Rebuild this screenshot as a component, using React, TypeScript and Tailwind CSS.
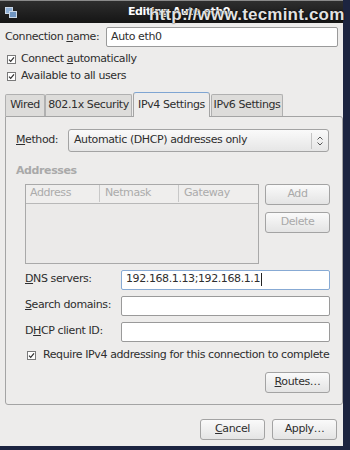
function Check({ className = "" }: { className?: string }) {
  return (
    <svg width="9" height="9" viewBox="0 0 9 9" className={className}>
      <rect x="0.5" y="0.5" width="8" height="8" fill="#fff" stroke="#7a7a7a" />
      <path d="M2 4.6 L3.7 6.4 L7 2.4" fill="none" stroke="#2e2e2e" strokeWidth="1.2" />
    </svg>
  );
}

function Btn({ children, disabled = false, className = "" }: { children: React.ReactNode; disabled?: boolean; className?: string }) {
  return (
    <div
      className={`flex h-[21px] w-[65px] items-center justify-center rounded-[3px] border border-[#a3a3a3] bg-gradient-to-b from-[#fafafa] to-[#e4e4e4] ${
        disabled ? "text-[#a9a9a9]" : "text-[#2e2e2e]"
      } ${className}`}
    >
      {children}
    </div>
  );
}

function Field({ value = "", focused = false, className = "" }: { value?: string; focused?: boolean; className?: string }) {
  return (
    <div
      className={`flex h-[20px] items-center rounded-[2px] border bg-white px-[4px] text-[#2e2e2e] ${
        focused ? "border-[#87aad4]" : "border-[#9a9a9a]"
      } ${className}`}
    >
      {value}
      {focused && <span className="ml-[1px] h-[13px] w-px bg-[#222]" />}
    </div>
  );
}

const tabs = [
  { label: "Wired", w: "w-[40px]" },
  { label: "802.1x Security", w: "w-[87px]" },
  { label: "IPv4 Settings", w: "w-[77px]", active: true },
  { label: "IPv6 Settings", w: "w-[72px]" },
];

export default function App() {
  return (
    <div
      className="h-[450px] w-[350px] overflow-hidden whitespace-nowrap bg-[#1c2440] text-[11px] tracking-[-0.4px] text-[#2e2e2e]"
      style={{ fontFamily: '"DejaVu Sans", sans-serif' }}
    >
      <div className="flex h-[446px] w-[343px] flex-col bg-[#edeceb]">
        {/* title bar */}
        <div className="relative flex h-[23px] items-center border-t border-[#8a8a8a] bg-gradient-to-b from-[#2e2e2e] to-[#151515] px-[5px]">
          <svg width="12" height="11" viewBox="0 0 12 11">
            <rect x="0.5" y="0.5" width="7" height="6" fill="#8fb0d6" stroke="#c9d6e6" />
            <rect x="4.5" y="4.5" width="7" height="6" fill="#6f95c2" stroke="#c9d6e6" />
          </svg>
          <span className="ml-[111px] font-bold text-white">Editing Auto eth0</span>
          <span
            className="absolute left-[149px] top-[1px] text-[17px] font-bold tracking-[0.2px] text-[#e2e2e2]"
            style={{ fontFamily: '"Liberation Sans", sans-serif', textShadow: "0 0 2px #000, 0 0 1px #000" }}
          >
            http://www.tecmint.com
          </span>
        </div>

        <div className="flex flex-col px-[5px]">
          <div className="mt-[4px] flex items-center">
            <span className="w-[102px]">
              Connection <u>n</u>ame:
            </span>
            <Field value="Auto eth0" className="w-[234px]" />
          </div>
          <div className="mt-[4px] flex h-[17px] items-center pl-[2px]">
            <Check />
            <span className="ml-[5px]">
              Connect <u>a</u>utomatically
            </span>
          </div>
          <div className="flex h-[17px] items-center pl-[2px]">
            <Check />
            <span className="ml-[5px]">Available to all users</span>
          </div>

          {/* tabs */}
          <div className="mt-[7px] flex items-end">
            {tabs.map((t) =>
              t.active ? (
                <div
                  key={t.label}
                  className={`${t.w} relative z-10 -mb-px mx-[1px] flex h-[25px] items-center justify-center rounded-t-[3px] border border-b-0 border-[#a4a4a4] border-t-[#7fa5d2] bg-[#edeceb]`}
                >
                  {t.label}
                </div>
              ) : (
                <div
                  key={t.label}
                  className={`${t.w} flex h-[22px] items-center justify-center rounded-t-[2px] border border-b-0 border-[#b0b0b0] bg-[#dddcda]`}
                >
                  {t.label}
                </div>
              )
            )}
          </div>

          {/* panel */}
          <div className="flex h-[289px] w-[338px] flex-col rounded-[3px] rounded-tl-none border border-[#a4a4a4] pl-[10px] pr-[12px]">
            <div className="mt-[12px] flex items-center">
              <span className="w-[52px]">
                <u>M</u>ethod:
              </span>
              <div className="flex h-[23px] w-[261px] items-center rounded-[3px] border border-[#a3a3a3] bg-gradient-to-b from-[#fafafa] to-[#e6e6e6] pl-[5px]">
                <span className="flex-1">Automatic (DHCP) addresses only</span>
                <span className="h-[16px] w-px bg-[#c4c4c4]" />
                <svg width="16" height="12" viewBox="0 0 16 12">
                  <path d="M5.5 4.5 L8 2 L10.5 4.5 M5.5 7.5 L8 10 L10.5 7.5" fill="none" stroke="#555" strokeWidth="1" />
                </svg>
              </div>
            </div>

            <div className="mt-[11px] font-bold text-[#a9a9a9]">Addresses</div>

            <div className="mt-[4px] flex pl-[9px]">
              <div className="flex h-[80px] w-[234px] flex-col border border-[#a9a9a9] bg-[#ebeae9]">
                <div className="flex h-[19px] items-center border-b border-[#b8b8b8] bg-[#efeeed] text-[#ababab]">
                  <span className="w-[74px] border-r border-[#c8c8c8] pl-[4px]">Address</span>
                  <span className="w-[79px] border-r border-[#c8c8c8] pl-[5px]">Netmask</span>
                  <span className="pl-[5px]">Gateway</span>
                </div>
              </div>
              <div className="ml-[6px] flex flex-col gap-[7px]">
                <Btn disabled>Add</Btn>
                <Btn disabled>Delete</Btn>
              </div>
            </div>

            <div className="mt-[6px] flex flex-col gap-[6px] pl-[9px]">
              <div className="flex items-center">
                <span className="w-[96px]">
                  <u>D</u>NS servers:
                </span>
                <Field value="192.168.1.13;192.168.1.1" focused className="w-[209px]" />
              </div>
              <div className="flex items-center">
                <span className="w-[96px]">
                  <u>S</u>earch domains:
                </span>
                <Field className="w-[209px]" />
              </div>
              <div className="flex items-center">
                <span className="w-[96px]">
                  D<u>H</u>CP client ID:
                </span>
                <Field className="w-[209px]" />
              </div>
            </div>

            <div className="mt-[6px] flex h-[16px] items-center pl-[11px]">
              <Check />
              <span className="ml-[7px]">Require IPv4 addressing for this connection to complete</span>
            </div>

            <div className="mt-[8px] flex justify-end">
              <Btn>
                <span>
                  <u>R</u>outes…
                </span>
              </Btn>
            </div>
          </div>

          <div className="mt-[14px] flex justify-end gap-[7px] pr-[1px]">
            <Btn>
              <span>
                <u>C</u>ancel
              </span>
            </Btn>
            <Btn>Apply…</Btn>
          </div>
        </div>
      </div>
    </div>
  );
}
